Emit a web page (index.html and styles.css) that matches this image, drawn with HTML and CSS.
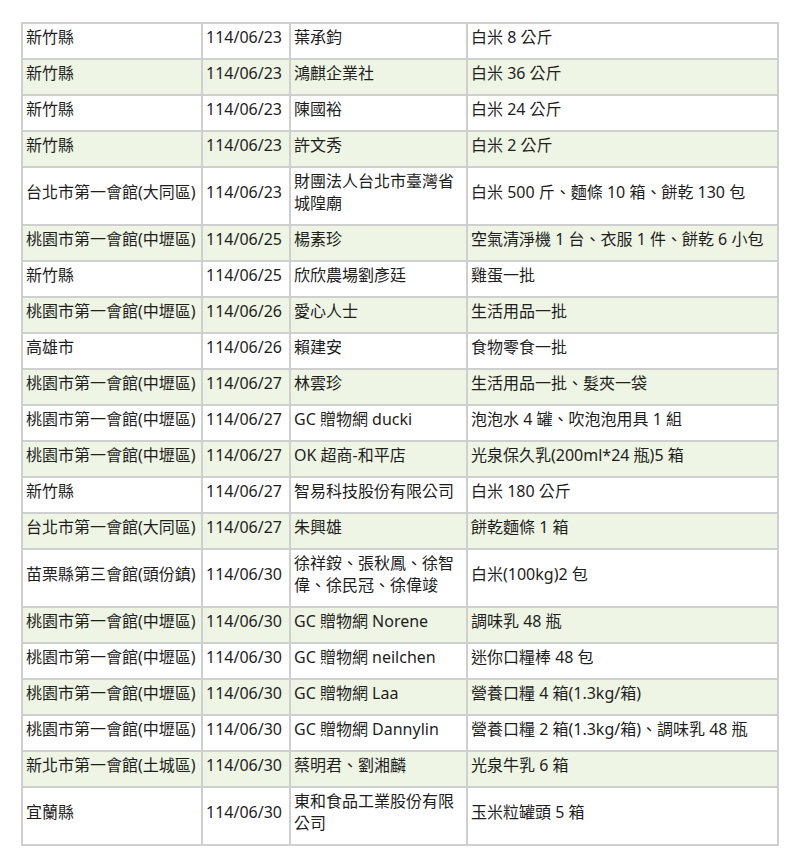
FILE: index.html
```html
<!DOCTYPE html>
<html lang="zh-Hant">
<head>
<meta charset="utf-8">
<title>捐贈名單</title>
<link rel="stylesheet" href="styles.css">
</head>
<body>
<div class="page">
<table class="donations">
<colgroup>
<col class="c-place">
<col class="c-date">
<col class="c-donor">
<col class="c-item">
</colgroup>
<tbody>
<tr><td>新竹縣</td><td>114/06/23</td><td>葉承鈞</td><td>白米 8 公斤</td></tr>
<tr><td>新竹縣</td><td>114/06/23</td><td>鴻麒企業社</td><td>白米 36 公斤</td></tr>
<tr><td>新竹縣</td><td>114/06/23</td><td>陳國裕</td><td>白米 24 公斤</td></tr>
<tr><td>新竹縣</td><td>114/06/23</td><td>許文秀</td><td>白米 2 公斤</td></tr>
<tr><td>台北市第一會館(大同區)</td><td>114/06/23</td><td>財團法人台北市臺灣省城隍廟</td><td>白米 500 斤、麵條 10 箱、餅乾 130 包</td></tr>
<tr><td>桃園市第一會館(中壢區)</td><td>114/06/25</td><td>楊素珍</td><td>空氣清淨機 1 台、衣服 1 件、餅乾 6 小包</td></tr>
<tr><td>新竹縣</td><td>114/06/25</td><td>欣欣農場劉彥廷</td><td>雞蛋一批</td></tr>
<tr><td>桃園市第一會館(中壢區)</td><td>114/06/26</td><td>愛心人士</td><td>生活用品一批</td></tr>
<tr><td>高雄市</td><td>114/06/26</td><td>賴建安</td><td>食物零食一批</td></tr>
<tr><td>桃園市第一會館(中壢區)</td><td>114/06/27</td><td>林雲珍</td><td>生活用品一批、髮夾一袋</td></tr>
<tr><td>桃園市第一會館(中壢區)</td><td>114/06/27</td><td>GC 贈物網 ducki</td><td>泡泡水 4 罐、吹泡泡用具 1 組</td></tr>
<tr><td>桃園市第一會館(中壢區)</td><td>114/06/27</td><td>OK 超商-和平店</td><td>光泉保久乳(200ml*24 瓶)5 箱</td></tr>
<tr><td>新竹縣</td><td>114/06/27</td><td>智易科技股份有限公司</td><td>白米 180 公斤</td></tr>
<tr><td>台北市第一會館(大同區)</td><td>114/06/27</td><td>朱興雄</td><td>餅乾麵條 1 箱</td></tr>
<tr><td>苗栗縣第三會館(頭份鎮)</td><td>114/06/30</td><td>徐祥銨、張秋鳳、徐智偉、徐民冠、徐偉竣</td><td>白米(100kg)2 包</td></tr>
<tr><td>桃園市第一會館(中壢區)</td><td>114/06/30</td><td>GC 贈物網 Norene</td><td>調味乳 48 瓶</td></tr>
<tr><td>桃園市第一會館(中壢區)</td><td>114/06/30</td><td>GC 贈物網 neilchen</td><td>迷你口糧棒 48 包</td></tr>
<tr><td>桃園市第一會館(中壢區)</td><td>114/06/30</td><td>GC 贈物網 Laa</td><td>營養口糧 4 箱(1.3kg/箱)</td></tr>
<tr><td>桃園市第一會館(中壢區)</td><td>114/06/30</td><td>GC 贈物網 Dannylin</td><td>營養口糧 2 箱(1.3kg/箱)、調味乳 48 瓶</td></tr>
<tr><td>新北市第一會館(土城區)</td><td>114/06/30</td><td>蔡明君、劉湘麟</td><td>光泉牛乳 6 箱</td></tr>
<tr><td>宜蘭縣</td><td>114/06/30</td><td>東和食品工業股份有限公司</td><td>玉米粒罐頭 5 箱</td></tr>
</tbody>
</table>
</div>
</body>
</html>
```

FILE: styles.css
```css
html, body {
  margin: 0;
  padding: 0;
  background: #ffffff;
}

.page {
  padding: 22px 0 0 21px;
}

.donations {
  width: 758px;
  table-layout: fixed;
  border-collapse: separate;
  border-spacing: 0;
  border: 1px solid #cfcfcf;
  font-family: "Noto Sans", "Noto Sans CJK TC", sans-serif;
  font-size: 16px;
  line-height: 22px;
  color: #1e1e1e;
}

.c-place { width: 180px; }
.c-date { width: 88px; }
.c-donor { width: 177px; }
.c-item { width: auto; }

.donations td {
  border: 1px solid #cfcfcf;
  padding: 2px 3px 10px 3px;
  vertical-align: middle;
  text-align: left;
  white-space: normal;
  word-break: break-all;
}

.donations tr:nth-child(even) td {
  background: #eef5e4;
}
```
